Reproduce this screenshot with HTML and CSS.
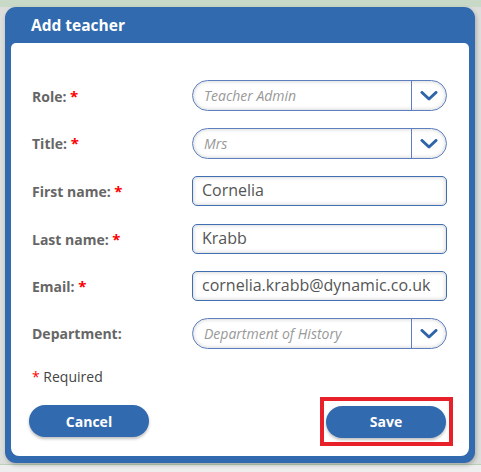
FILE: index.html
```html
<!DOCTYPE html>
<html>
<head>
<meta charset="utf-8">
<link rel="stylesheet" href="styles.css">
</head>
<body>
<div class="backdrop-top"></div>
<div class="dialog">
  <div class="dialog-header">Add teacher</div>
  <div class="dialog-body">
    <div class="form">
      <div class="row">
        <label class="label">Role: <span class="req">*</span></label>
        <div class="select">
          <span class="select-value">Teacher Admin</span>
          <span class="select-btn"><svg width="18" height="10" viewBox="0 0 18 10"><path d="M2 1.5 L9 8 L16 1.5" fill="none" stroke="#2f64a8" stroke-width="3" stroke-linecap="round" stroke-linejoin="round"/></svg></span>
        </div>
      </div>
      <div class="row">
        <label class="label">Title: <span class="req">*</span></label>
        <div class="select">
          <span class="select-value">Mrs</span>
          <span class="select-btn"><svg width="18" height="10" viewBox="0 0 18 10"><path d="M2 1.5 L9 8 L16 1.5" fill="none" stroke="#2f64a8" stroke-width="3" stroke-linecap="round" stroke-linejoin="round"/></svg></span>
        </div>
      </div>
      <div class="row">
        <label class="label">First name: <span class="req">*</span></label>
        <div class="input">Cornelia</div>
      </div>
      <div class="row">
        <label class="label">Last name: <span class="req">*</span></label>
        <div class="input">Krabb</div>
      </div>
      <div class="row">
        <label class="label">Email: <span class="req">*</span></label>
        <div class="input">cornelia.krabb@dynamic.co.uk</div>
      </div>
      <div class="row">
        <label class="label">Department:</label>
        <div class="select">
          <span class="select-value">Department of History</span>
          <span class="select-btn"><svg width="18" height="10" viewBox="0 0 18 10"><path d="M2 1.5 L9 8 L16 1.5" fill="none" stroke="#2f64a8" stroke-width="3" stroke-linecap="round" stroke-linejoin="round"/></svg></span>
        </div>
      </div>
    </div>
    <div class="required"><span class="req-plain">*</span> Required</div>
    <div class="actions">
      <button class="btn">Cancel</button>
      <div class="highlight"><button class="btn">Save</button></div>
    </div>
  </div>
</div>
</body>
</html>
```
FILE: styles.css
```css
html, body {
  margin: 0;
  padding: 0;
}
body {
  width: 481px;
  height: 472px;
  overflow: hidden;
  background: linear-gradient(to bottom, #dcdedc 0, #dcdedc 464px, #b9d2b9 464px, #b9d2b9 465px, #eeeeee 465px);
  font-family: "Open Sans", "Liberation Sans", sans-serif;
}
.backdrop-top {
  height: 7px;
  background: #c8d9c8;
}
.dialog {
  margin-left: 5px;
  width: 470px;
  height: 456px;
  background: #316aae;
  border-radius: 11px;
  display: flex;
  flex-direction: column;
  box-sizing: border-box;
  padding: 0 6px 7px 6px;
  box-shadow: 1px 2px 4px rgba(0,0,0,0.25);
}
.dialog-header {
  height: 36px;
  line-height: 37px;
  color: #fff;
  font-weight: 700;
  font-size: 15.5px;
  padding-left: 20px;
}
.dialog-body {
  flex: 1;
  background: #fff;
  border-radius: 5px 5px 8px 8px;
  padding: 29px 22px 0 21px;
  box-sizing: border-box;
}
.row {
  height: 47.6px;
  display: flex;
  align-items: center;
}
.label {
  width: 160px;
  font-weight: 700;
  font-size: 14px;
  color: #666;
}
.req {
  color: #f00;
  font-size: 15px;
}
.select {
  width: 255px;
  height: 31px;
  box-sizing: border-box;
  border: 1px solid #5d7fc0;
  border-radius: 16px;
  display: flex;
  align-items: center;
  box-shadow: inset 0 0 4px rgba(0,0,0,0.22);
}
.select-value {
  flex: 1;
  padding-left: 11px;
  font-style: italic;
  font-size: 14px;
  color: #999;
}
.select-btn {
  width: 35px;
  height: 100%;
  border-left: 1px solid #5d7fc0;
  display: flex;
  align-items: center;
  justify-content: center;
  padding-top: 1px;
  box-sizing: border-box;
}
.input {
  width: 255px;
  height: 30px;
  box-sizing: border-box;
  border: 1.5px solid #3f6fb2;
  border-radius: 5px;
  padding-left: 9px;
  font-size: 16px;
  line-height: 27px;
  color: #555;
  box-shadow: inset 0 0 4px rgba(0,0,0,0.22);
}
.required {
  margin-top: 9px;
  font-size: 14px;
  color: #444;
  line-height: 20px;
}
.req-plain {
  color: #f00;
}
.actions {
  margin-top: 10px;
  display: flex;
  justify-content: space-between;
  align-items: center;
  margin-left: -3px;
}
.btn {
  width: 120px;
  height: 32px;
  border: none;
  border-radius: 16px;
  background: #316aae;
  color: #fff;
  font-family: "Open Sans", "Liberation Sans", sans-serif;
  font-weight: 700;
  font-size: 14px;
  box-shadow: 0 2px 3px rgba(0,0,0,0.25);
  display: block;
  padding: 0;
}
.highlight {
  border: 4px solid #e8202a;
  padding: 5px 3px 4px 2px;
  margin-right: -6px;
}
```
